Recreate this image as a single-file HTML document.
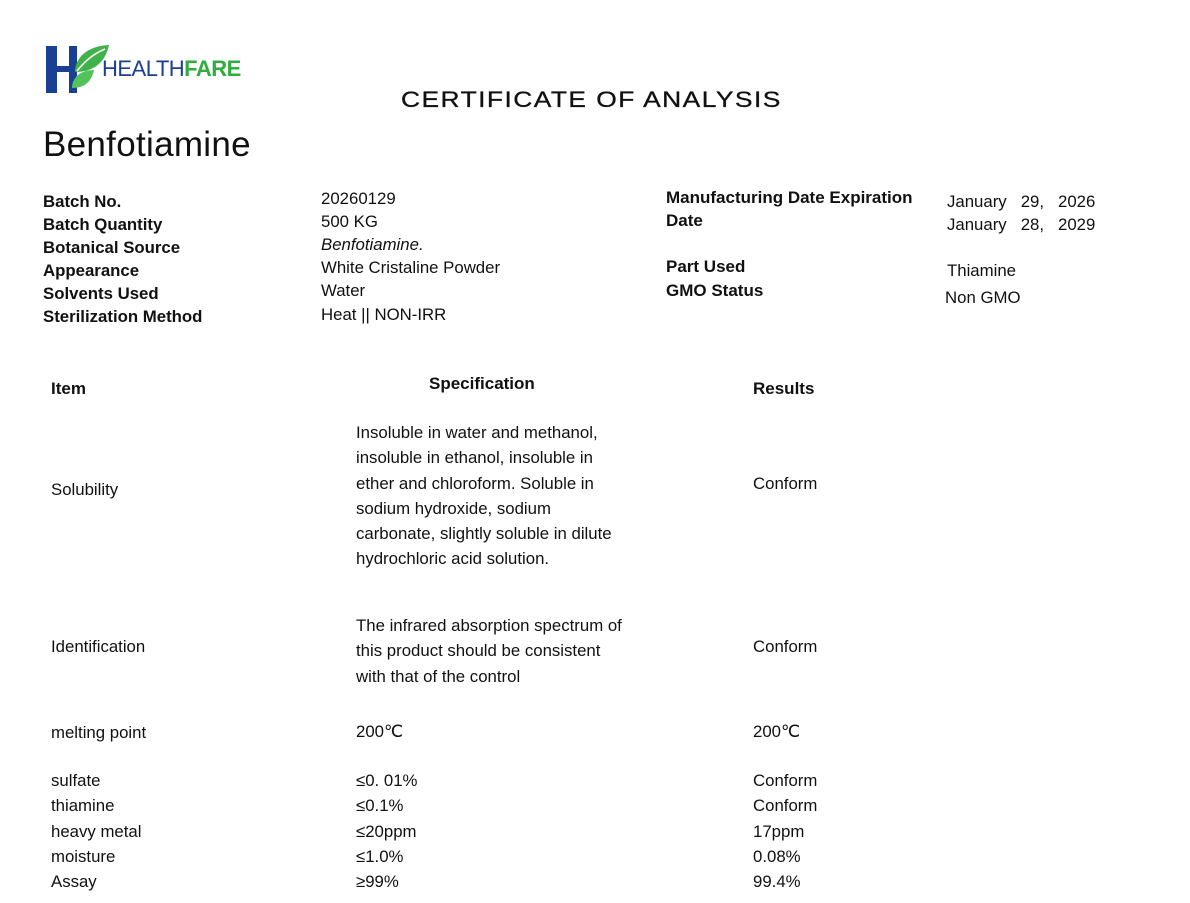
<!DOCTYPE html>
<html><head><meta charset="utf-8"><style>
body{margin:0;width:1190px;height:903px;background:#fff;position:relative;overflow:hidden;font-family:"Liberation Sans",sans-serif;color:#111}
.a{position:absolute;white-space:nowrap;font-size:16.8px;line-height:20px}
.b{font-weight:bold}
</style></head><body>
<svg style="position:absolute;left:44px;top:42px" width="80" height="54" viewBox="0 0 80 54">
<path d="M2 4h11v20h12V4h8v47h-8V30H13v21H2z" fill="#1b3f93"/>
<path d="M31 30c0-14 12-26 34-27-3 14-12 27-34 27z" fill="#3fb24a"/>
<path d="M28 46c0-10 8-18 22-18-2 10-8 18-22 18z" fill="#52c25a"/>
<path d="M33 29c8-10 16-17 28-22" stroke="#fff" stroke-width="1.5" fill="none"/>
</svg>
<div class="a" style="left:102px;top:56px;font-size:22px;line-height:26px;letter-spacing:-0.5px"><span style="color:#1b3f93">HEALTH</span><span style="color:#2fae3f;font-weight:bold">FARE</span></div>
<div class="a" style="left:401px;top:88px;font-size:22px;line-height:24px;letter-spacing:1.2px;transform:scaleX(1.2);transform-origin:left;-webkit-text-stroke:0.3px #111">CERTIFICATE OF ANALYSIS</div>
<div class="a" style="left:43px;top:125px;font-size:35px;line-height:40px;letter-spacing:0.3px">Benfotiamine</div>

<div class="a b" style="left:43px;top:192px;font-size:16.8px">Batch No.</div>
<div class="a b" style="left:43px;top:215px;font-size:16.8px">Batch Quantity</div>
<div class="a b" style="left:43px;top:238px;font-size:16.8px">Botanical Source</div>
<div class="a b" style="left:43px;top:261px;font-size:16.8px">Appearance</div>
<div class="a b" style="left:43px;top:284px;font-size:16.8px">Solvents Used</div>
<div class="a b" style="left:43px;top:307px;font-size:16.8px">Sterilization Method</div>
<div class="a" style="left:321px;top:189px">20260129</div>
<div class="a" style="left:321px;top:212px">500 KG</div>
<div class="a" style="left:321px;top:235px;font-style:italic">Benfotiamine.</div>
<div class="a" style="left:321px;top:258px">White Cristaline Powder</div>
<div class="a" style="left:321px;top:281px">Water</div>
<div class="a" style="left:321px;top:305px">Heat || NON-IRR</div>
<div class="a b" style="left:666px;top:188px;font-size:17px">Manufacturing Date Expiration</div>
<div class="a b" style="left:666px;top:211px;font-size:17px">Date</div>
<div class="a b" style="left:666px;top:257px;font-size:17px">Part Used</div>
<div class="a b" style="left:666px;top:281px;font-size:17px">GMO Status</div>
<div class="a" style="left:947px;top:192px">January&nbsp;&nbsp; 29,&nbsp;&nbsp; 2026</div>
<div class="a" style="left:947px;top:215px">January&nbsp;&nbsp; 28,&nbsp;&nbsp; 2029</div>
<div class="a" style="left:947px;top:261px">Thiamine</div>
<div class="a" style="left:945px;top:288px">Non GMO</div>

<div class="a b" style="left:51px;top:379px;font-size:17px">Item</div>
<div class="a b" style="left:429px;top:374px;font-size:17px">Specification</div>
<div class="a b" style="left:753px;top:379px;font-size:17px">Results</div>

<div class="a" style="left:356px;top:420px;line-height:25.3px">Insoluble in water and methanol,<br>insoluble in ethanol, insoluble in<br>ether and chloroform. Soluble in<br>sodium hydroxide, sodium<br>carbonate, slightly soluble in dilute<br>hydrochloric acid solution.</div>
<div class="a" style="left:51px;top:480px">Solubility</div>
<div class="a" style="left:753px;top:474px">Conform</div>

<div class="a" style="left:356px;top:613px;line-height:25.3px">The infrared absorption spectrum of<br>this product should be consistent<br>with that of the control</div>
<div class="a" style="left:51px;top:637px">Identification</div>
<div class="a" style="left:753px;top:637px">Conform</div>

<div class="a" style="left:51px;top:723px">melting point</div>
<div class="a" style="left:356px;top:722px">200℃</div>
<div class="a" style="left:753px;top:722px">200℃</div>

<div class="a" style="left:51px;top:768px;line-height:25.3px">sulfate<br>thiamine<br>heavy metal<br>moisture<br>Assay</div>
<div class="a" style="left:356px;top:768px;line-height:25.3px">≤0. 01%<br>≤0.1%<br>≤20ppm<br>≤1.0%<br>≥99%</div>
<div class="a" style="left:753px;top:768px;line-height:25.3px">Conform<br>Conform<br>17ppm<br>0.08%<br>99.4%</div>
</body></html>
